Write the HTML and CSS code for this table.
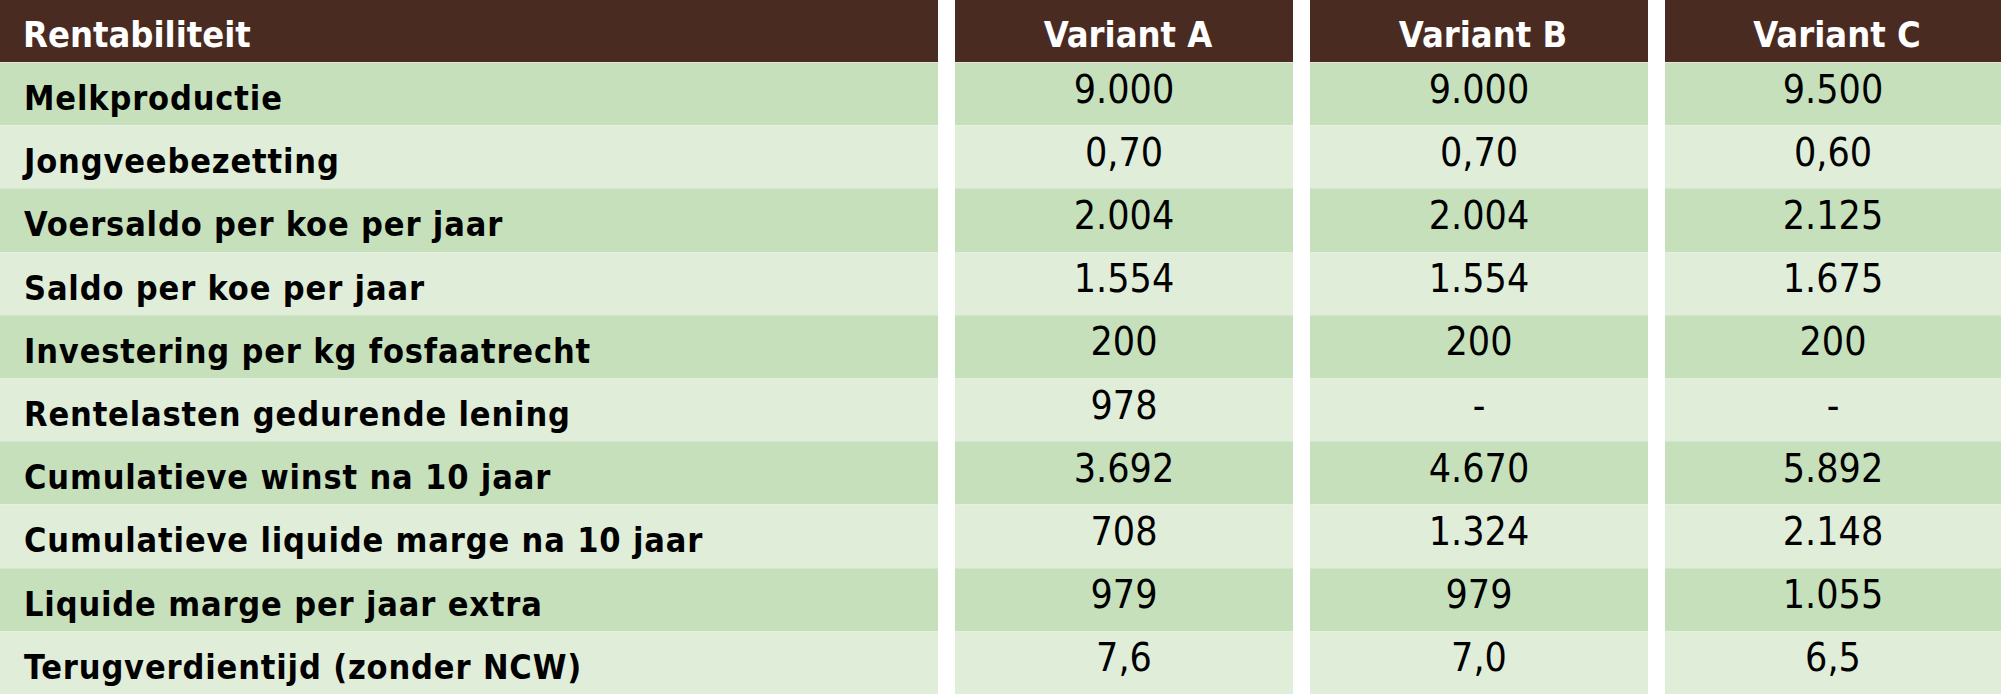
FILE: index.html
```html
<!DOCTYPE html>
<html lang="nl">
<head>
<meta charset="utf-8">
<title>Rentabiliteit</title>
<link rel="stylesheet" href="styles.css">
</head>
<body>
<div class="table">
  <div class="row head">
    <div class="cell label">Rentabiliteit</div>
    <div class="cell val">Variant A</div>
    <div class="cell val">Variant B</div>
    <div class="cell val">Variant C</div>
  </div>
  <div class="row dark">
    <div class="cell label">Melkproductie</div>
    <div class="cell val">9.000</div><div class="cell val">9.000</div><div class="cell val">9.500</div>
  </div>
  <div class="row light">
    <div class="cell label">Jongveebezetting</div>
    <div class="cell val">0,70</div><div class="cell val">0,70</div><div class="cell val">0,60</div>
  </div>
  <div class="row dark">
    <div class="cell label">Voersaldo per koe per jaar</div>
    <div class="cell val">2.004</div><div class="cell val">2.004</div><div class="cell val">2.125</div>
  </div>
  <div class="row light">
    <div class="cell label">Saldo per koe per jaar</div>
    <div class="cell val">1.554</div><div class="cell val">1.554</div><div class="cell val">1.675</div>
  </div>
  <div class="row dark">
    <div class="cell label">Investering per kg fosfaatrecht</div>
    <div class="cell val">200</div><div class="cell val">200</div><div class="cell val">200</div>
  </div>
  <div class="row light">
    <div class="cell label">Rentelasten gedurende lening</div>
    <div class="cell val">978</div><div class="cell val">-</div><div class="cell val">-</div>
  </div>
  <div class="row dark">
    <div class="cell label">Cumulatieve winst na 10 jaar</div>
    <div class="cell val">3.692</div><div class="cell val">4.670</div><div class="cell val">5.892</div>
  </div>
  <div class="row light">
    <div class="cell label">Cumulatieve liquide marge na 10 jaar</div>
    <div class="cell val">708</div><div class="cell val">1.324</div><div class="cell val">2.148</div>
  </div>
  <div class="row dark">
    <div class="cell label">Liquide marge per jaar extra</div>
    <div class="cell val">979</div><div class="cell val">979</div><div class="cell val">1.055</div>
  </div>
  <div class="row light">
    <div class="cell label">Terugverdientijd (zonder NCW)</div>
    <div class="cell val">7,6</div><div class="cell val">7,0</div><div class="cell val">6,5</div>
  </div>
</div>
</body>
</html>
```
FILE: styles.css
```css
html, body {
  margin: 0;
  padding: 0;
  background: #ffffff;
}
.table {
  width: 2001px;
  height: 694px;
  display: grid;
  grid-template-rows: 62px repeat(10, 1fr);
}
.row {
  display: grid;
  grid-template-columns: 938px 338px 338px 336px;
  column-gap: 17px;
}
.cell {
  display: flex;
  align-items: center;
  box-sizing: border-box;
  font-family: "DejaVu Sans Condensed", "DejaVu Sans", sans-serif;
  color: #000;
}
.label {
  padding-left: 24px;
  padding-top: 8px;
  font-weight: bold;
  font-size: 34px;
  letter-spacing: 0.85px;
}
.val {
  justify-content: center;
  font-size: 39px;
  font-weight: normal;
  padding-bottom: 10px;
}
.head .cell {
  background: #4a2b22;
  color: #fff;
  font-weight: bold;
  font-size: 36px;
  letter-spacing: 0;
  padding-top: 6px;
  padding-bottom: 0;
}
.head .val {
  padding-left: 8px;
}
.head .label {
  padding-left: 23px;
}
.dark .cell {
  background: #c6e0bb;
  border-top: 1px solid #d3e6cb;
}
.light .cell {
  background: #e0edd9;
  border-top: 1px solid #e6f0e1;
}
.head + .dark .cell {
  border-top: 1px solid #e9e6e2;
}
```
